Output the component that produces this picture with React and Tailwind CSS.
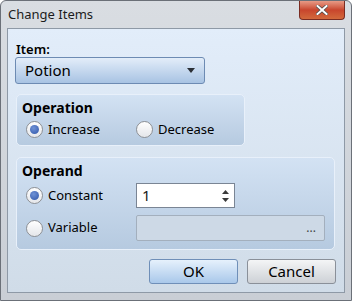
import { useState } from "react";

function Radio({ checked, label, onClick, width }) {
    return (
        <button type="button" onClick={onClick} className={`flex items-center gap-[5px] text-left ${width}`}>
            <span className="flex h-[17px] w-[17px] items-center justify-center rounded-full border border-[#8c8f94] bg-gradient-to-b from-[#ffffff] to-[#e4e6ea] shadow-[inset_0_0_1px_#fff]">
                {checked && <span className="h-[9px] w-[9px] rounded-full bg-[radial-gradient(circle_at_40%_35%,#6f92d6,#2f55a8)]" />}
            </span>
            <span>{label}</span>
        </button>
    );
}

function Group({ title, className, children }) {
    return (
        <div className={`rounded-[5px] border border-[#e8f0fa] bg-gradient-to-b from-[#d3e2f3] to-[#b6cae0] px-[5px] ${className}`}>
            <div className="text-[14px] font-bold leading-[17px] text-black">{title}</div>
            {children}
        </div>
    );
}

export default function App() {
    const [op, setOp] = useState("increase");
    const [operand, setOperand] = useState("constant");

    return (
        <div
            className="flex h-[301px] w-[352px] flex-col rounded-t-[6px] border border-[#6b7078] bg-gradient-to-b from-[#d9dde2] to-[#c9ced5] text-[13px] text-black"
            style={{ fontFamily: '"Noto Sans", "Open Sans", sans-serif' }}
        >
            {/* Title bar */}
            <div className="flex h-[27px] items-start justify-between pl-[7px]">
                <span className="mt-[5px] text-[13px] leading-[16px] text-[#1c1c1c]">Change Items</span>
                <div className="mr-[6px] flex h-[19px] w-[46px] items-center justify-center rounded-b-[4px] border border-t-0 border-[#7a2c22] bg-gradient-to-b from-[#e79a86] via-[#c8452d] to-[#d2693c]">
                    <svg width="12" height="10" viewBox="0 0 12 10">
                        <path d="M1.5 1 L10.5 9 M10.5 1 L1.5 9" stroke="#4a4a4a" strokeWidth="3.4" strokeLinecap="square" />
                        <path d="M1.5 1 L10.5 9 M10.5 1 L1.5 9" stroke="#ffffff" strokeWidth="2" strokeLinecap="square" />
                    </svg>
                </div>
            </div>

            {/* Client area */}
            <div className="mx-[6px] flex flex-1 flex-col border border-[#8e99a6] bg-gradient-to-b from-[#e2edfa] to-[#d0dce8] pl-[8px] pt-[12px]">
                <div className="text-[13px] font-semibold leading-[16px]">Item:</div>
                <button
                    type="button"
                    className="ml-[-1px] flex h-[27px] w-[190px] items-center justify-between rounded-[3px] border border-[#6d8bb3] bg-gradient-to-b from-[#e3edf9] to-[#a8c3e3] pl-[9px] pr-[9px] text-[15px]"
                >
                    <span>Potion</span>
                    <svg width="8" height="5" viewBox="0 0 8 5">
                        <path d="M0 0 H8 L4 5 Z" fill="#2b2f36" />
                    </svg>
                </button>

                <Group title="Operation" className="mt-[10px] h-[52px] w-[229px] pt-[4px]">
                    <div className="mt-[4px] flex items-center pl-[4px]">
                        <Radio width="w-[110px]" label="Increase" checked={op === "increase"} onClick={() => setOp("increase")} />
                        <Radio label="Decrease" checked={op === "decrease"} onClick={() => setOp("decrease")} />
                    </div>
                </Group>

                <Group title="Operand" className="mt-[11px] h-[93px] w-[319px] pt-[4px]">
                    <div className="mt-[4px] flex items-center pl-[4px]">
                        <Radio width="w-[110px]" label="Constant" checked={operand === "constant"} onClick={() => setOperand("constant")} />
                        <div className="flex h-[25px] w-[99px] items-center justify-between border border-[#7a8594] bg-white pl-[5px] pr-[5px]">
                            <span className="text-[15px] text-[#202020]">1</span>
                            <div className="flex flex-col items-center gap-[4px]">
                                <svg width="7" height="4" viewBox="0 0 7 4"><path d="M0 4 L3.5 0 L7 4 Z" fill="#3a3a3a" /></svg>
                                <svg width="7" height="4" viewBox="0 0 7 4"><path d="M0 0 H7 L3.5 4 Z" fill="#3a3a3a" /></svg>
                            </div>
                        </div>
                    </div>
                    <div className="mt-[7px] flex items-center pl-[4px]">
                        <Radio width="w-[110px]" label="Variable" checked={operand === "variable"} onClick={() => setOperand("variable")} />
                        <div className="flex h-[26px] w-[189px] items-center justify-end rounded-[2px] border border-[#a3afbd] bg-[#cdd9e6] pr-[8px] text-[12px] leading-none text-[#444]">
                            ...
                        </div>
                    </div>
                </Group>

                <div className="mt-[9px] flex justify-end gap-[9px] pr-[8px]">
                    <button type="button" className="h-[25px] w-[89px] rounded-[3px] border border-[#6f8fb8] bg-gradient-to-b from-[#e6f1fc] to-[#a9c8ea] text-[15px] leading-none">
                        OK
                    </button>
                    <button type="button" className="h-[25px] w-[89px] rounded-[3px] border border-[#8a9099] bg-gradient-to-b from-[#f4f5f6] to-[#cdd1d6] text-[15px] leading-none">
                        Cancel
                    </button>
                </div>
            </div>
            <div className="h-[7px]" />
        </div>
    );
}
